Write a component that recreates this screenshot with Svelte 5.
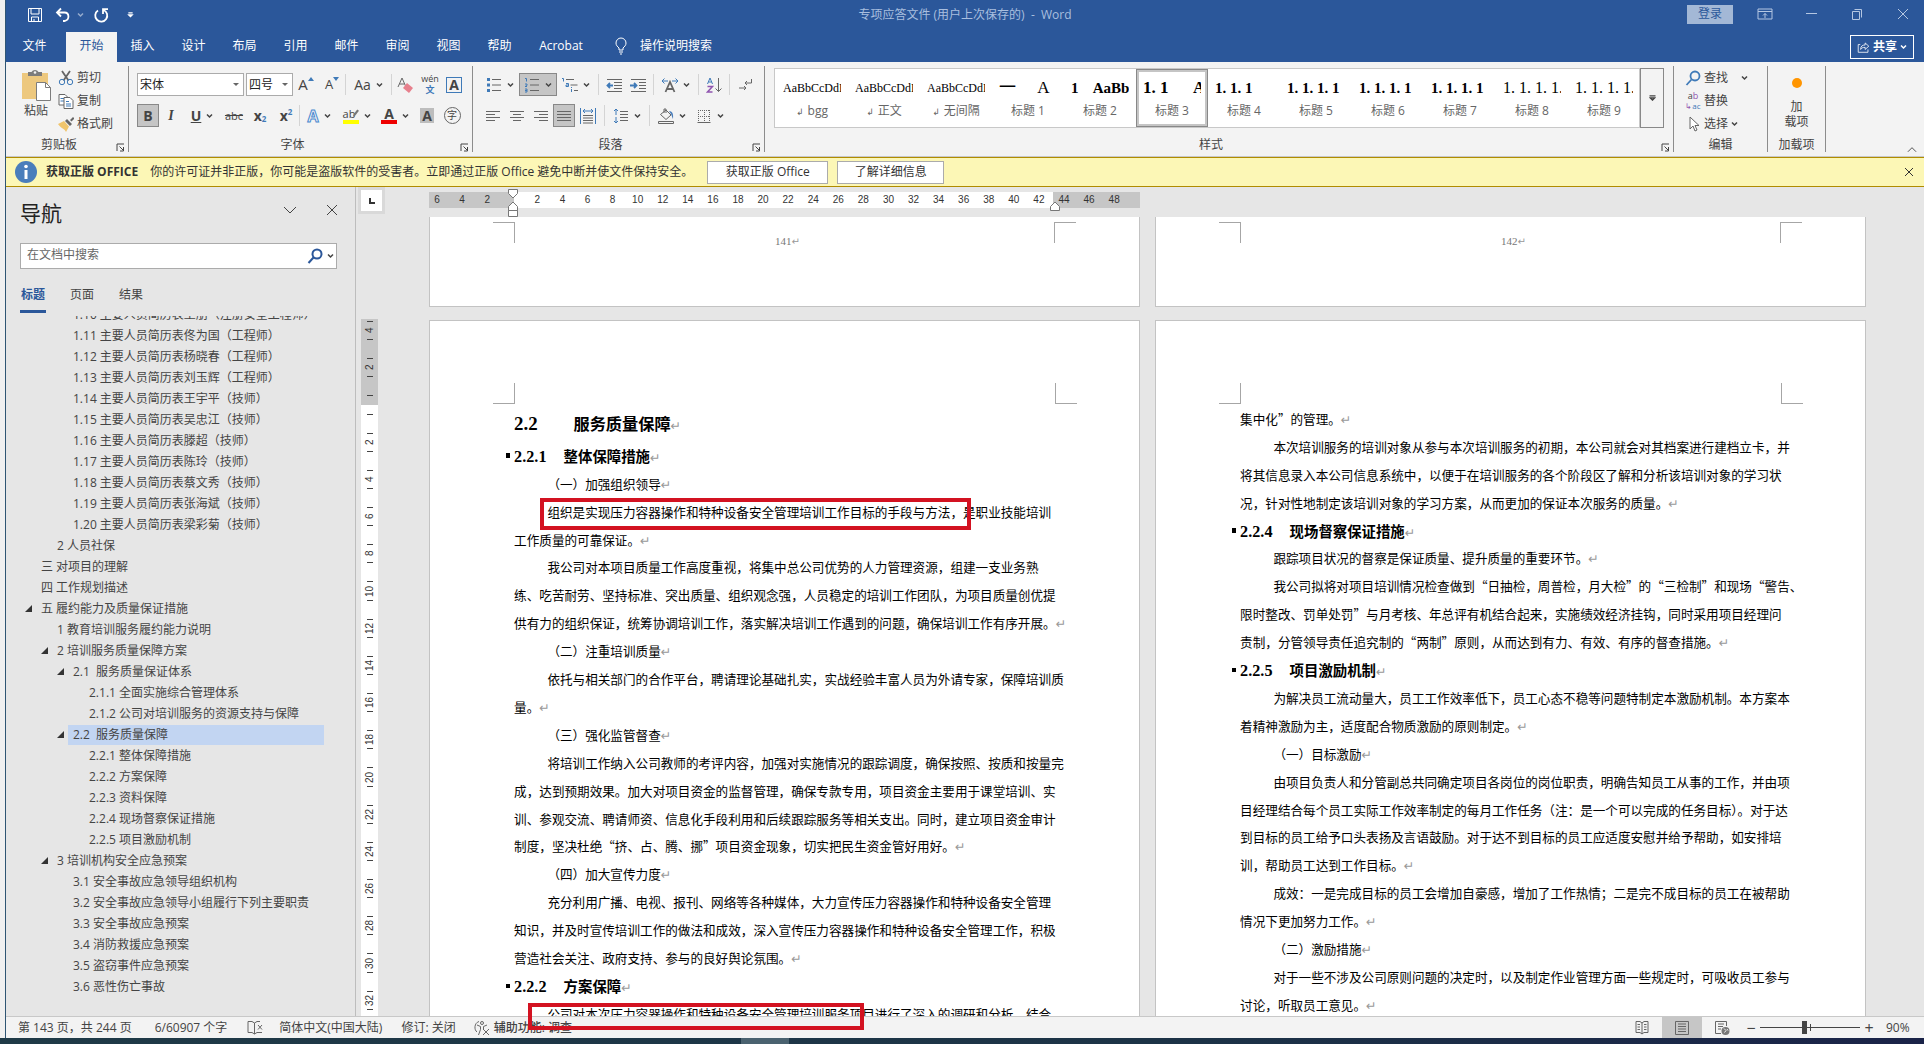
<script>
	let zoom = $state(90);
	let navTab = $state('标题');

	const menu = ['插入', '设计', '布局', '引用', '邮件', '审阅', '视图', '帮助'];

	const styles = [
		{ name: 'bgg', sample: 'AaBbCcDdEe', mark: true, cls: 'small' },
		{ name: '正文', sample: 'AaBbCcDdEe', mark: true, cls: 'small' },
		{ name: '无间隔', sample: 'AaBbCcDdEe', mark: true, cls: 'small' },
		{ name: '标题 1', sample: '一     A', cls: 'big' },
		{ name: '标题 2', sample: '1    AaBb', cls: 'bold' },
		{ name: '标题 3', sample: '1. 1      A', cls: 'bold large', on: true },
		{ name: '标题 4', sample: '1. 1. 1', cls: 'bold' },
		{ name: '标题 5', sample: '1. 1. 1. 1', cls: 'bold' },
		{ name: '标题 6', sample: '1. 1. 1. 1', cls: 'bold' },
		{ name: '标题 7', sample: '1. 1. 1. 1', cls: 'bold' },
		{ name: '标题 8', sample: '1. 1. 1. 1.', cls: 'plain-no' },
		{ name: '标题 9', sample: '1. 1. 1. 1.', cls: 'plain-no' }
	];

	const headings = [
		{ level: 3, text: '1.10 主要人员简历表王朋（注册安全工程师）' },
		{ level: 3, text: '1.11 主要人员简历表佟为国（工程师）' },
		{ level: 3, text: '1.12 主要人员简历表杨晓春（工程师）' },
		{ level: 3, text: '1.13 主要人员简历表刘玉辉（工程师）' },
		{ level: 3, text: '1.14 主要人员简历表王宇平（技师）' },
		{ level: 3, text: '1.15 主要人员简历表吴忠江（技师）' },
		{ level: 3, text: '1.16 主要人员简历表滕超（技师）' },
		{ level: 3, text: '1.17 主要人员简历表陈玲（技师）' },
		{ level: 3, text: '1.18 主要人员简历表蔡文秀（技师）' },
		{ level: 3, text: '1.19 主要人员简历表张海斌（技师）' },
		{ level: 3, text: '1.20 主要人员简历表梁彩菊（技师）' },
		{ level: 2, text: '2 人员社保' },
		{ level: 1, text: '三 对项目的理解' },
		{ level: 1, text: '四 工作规划描述' },
		{ level: 1, text: '五 履约能力及质量保证措施', open: true },
		{ level: 2, text: '1 教育培训服务履约能力说明' },
		{ level: 2, text: '2 培训服务质量保障方案', open: true },
		{ level: 3, text: '2.1  服务质量保证体系', open: true },
		{ level: 4, text: '2.1.1 全面实施综合管理体系' },
		{ level: 4, text: '2.1.2 公司对培训服务的资源支持与保障' },
		{ level: 3, text: '2.2  服务质量保障', open: true, on: true },
		{ level: 4, text: '2.2.1 整体保障措施' },
		{ level: 4, text: '2.2.2 方案保障' },
		{ level: 4, text: '2.2.3 资料保障' },
		{ level: 4, text: '2.2.4 现场督察保证措施' },
		{ level: 4, text: '2.2.5 项目激励机制' },
		{ level: 2, text: '3 培训机构安全应急预案', open: true },
		{ level: 3, text: '3.1 安全事故应急领导组织机构' },
		{ level: 3, text: '3.2 安全事故应急领导小组履行下列主要职责' },
		{ level: 3, text: '3.3 安全事故应急预案' },
		{ level: 3, text: '3.4 消防救援应急预案' },
		{ level: 3, text: '3.5 盗窃事件应急预案' },
		{ level: 3, text: '3.6 恶性伤亡事故' }
	];

	// a paragraph is a list of its lines, a heading has a number and a title
	const leftPage = [
		{ h: 2, no: '2.2', title: '服务质量保障' },
		{ h: 3, no: '2.2.1', title: '整体保障措施' },
		{ lines: ['（一）加强组织领导'] },
		{ lines: ['组织是实现压力容器操作和特种设备安全管理培训工作目标的手段与方法，是职业技能培训', '工作质量的可靠保证。'] },
		{ lines: [
			'我公司对本项目质量工作高度重视，将集中总公司优势的人力管理资源，组建一支业务熟',
			'练、吃苦耐劳、坚持标准、突出质量、组织观念强，人员稳定的培训工作团队，为项目质量创优提',
			'供有力的组织保证，统筹协调培训工作，落实解决培训工作遇到的问题，确保培训工作有序开展。'
		] },
		{ lines: ['（二）注重培训质量'] },
		{ lines: ['依托与相关部门的合作平台，聘请理论基础扎实，实战经验丰富人员为外请专家，保障培训质', '量。'] },
		{ lines: ['（三）强化监管督查'] },
		{ lines: [
			'将培训工作纳入公司教师的考评内容，加强对实施情况的跟踪调度，确保按照、按质和按量完',
			'成，达到预期效果。加大对项目资金的监督管理，确保专款专用，项目资金主要用于课堂培训、实',
			'训、参观交流、聘请师资、信息化手段利用和后续跟踪服务等相关支出。同时，建立项目资金审计',
			'制度，坚决杜绝“挤、占、腾、挪”项目资金现象，切实把民生资金管好用好。'
		] },
		{ lines: ['（四）加大宣传力度'] },
		{ lines: [
			'充分利用广播、电视、报刊、网络等各种媒体，大力宣传压力容器操作和特种设备安全管理',
			'知识，并及时宣传培训工作的做法和成效，深入宣传压力容器操作和特种设备安全管理工作，积极',
			'营造社会关注、政府支持、参与的良好舆论氛围。'
		] },
		{ h: 3, no: '2.2.2', title: '方案保障' },
		{ lines: ['公司对本次压力容器操作和特种设备安全管理培训服务项目进行了深入的调研和分析，结合'], open: true }
	];

	const rightPage = [
		{ lines: ['集中化”的管理。'], flush: true },
		{ lines: [
			'本次培训服务的培训对象从参与本次培训服务的初期，本公司就会对其档案进行建档立卡，并',
			'将其信息录入本公司信息系统中，以便于在培训服务的各个阶段区了解和分析该培训对象的学习状',
			'况，针对性地制定该培训对象的学习方案，从而更加的保证本次服务的质量。'
		] },
		{ h: 3, no: '2.2.4', title: '现场督察保证措施' },
		{ lines: ['跟踪项目状况的督察是保证质量、提升质量的重要环节。'] },
		{ lines: [
			'我公司拟将对项目培训情况检查做到“日抽检，周普检，月大检”的“三检制”和现场“警告、',
			'限时整改、罚单处罚”与月考核、年总评有机结合起来，实施绩效经济挂钩，同时采用项目经理问',
			'责制，分管领导责任追究制的“两制”原则，从而达到有力、有效、有序的督查措施。'
		] },
		{ h: 3, no: '2.2.5', title: '项目激励机制' },
		{ lines: ['为解决员工流动量大，员工工作效率低下，员工心态不稳等问题特制定本激励机制。本方案本', '着精神激励为主，适度配合物质激励的原则制定。'] },
		{ lines: ['（一）目标激励'] },
		{ lines: [
			'由项目负责人和分管副总共同确定项目各岗位的岗位职责，明确告知员工从事的工作，并由项',
			'目经理结合每个员工实际工作效率制定的每月工作任务（注：是一个可以完成的任务目标）。对于达',
			'到目标的员工给予口头表扬及言语鼓励。对于达不到目标的员工应适度安慰并给予帮助，如安排培',
			'训，帮助员工达到工作目标。'
		] },
		{ lines: ['成效：一是完成目标的员工会增加自豪感，增加了工作热情；二是完不成目标的员工在被帮助', '情况下更加努力工作。'] },
		{ lines: ['（二）激励措施'] },
		{ lines: ['对于一些不涉及公司原则问题的决定时，以及制定作业管理方面一些规定时，可吸收员工参与', '讨论，听取员工意见。'] }
	];

	const pages = [
		{ prev: 141, body: leftPage },
		{ prev: 142, body: rightPage }
	];

	const hRuler = [6, 4, 2, '', ...Array.from({ length: 24 }, (_, i) => (i + 1) * 2)];
	const vRuler = [4, 2, '', ...Array.from({ length: 16 }, (_, i) => (i + 1) * 2)];
</script>

{#snippet chev()}
	<svg class="chev" viewBox="0 0 7 5"><path d="M1 1l2.5 2.5L6 1" /></svg>
{/snippet}

{#snippet launcher(label)}
	<button class="launcher" aria-label={label}>
		<svg viewBox="0 0 9 9"><path d="M1 8V1h7M3.500 3.500L7 7M7.500 4v4H4" /></svg>
	</button>
{/snippet}

{#snippet lines(d)}
	<svg class="icon" viewBox="0 0 16 16"><path class="grey" {d} /></svg>
{/snippet}

{#snippet paper(blocks)}
	<div class="text" style="zoom: {zoom / 100}">
		{#each blocks as b}
			{#if b.h === 2}
				<h2><span class="no">{b.no}</span>{b.title}<i class="end">↵</i></h2>
			{:else if b.h === 3}
				<h3><span class="no">{b.no}</span>{b.title}<i class="end">↵</i></h3>
			{:else}
				<p class:flush={b.flush}>
					{#each b.lines as line, i}
						<span class="line">{line}{#if i === b.lines.length - 1 && !b.open}<i class="end">↵</i>{/if}</span>
					{/each}
				</p>
			{/if}
		{/each}
	</div>
{/snippet}

<div class="desktop" lang="zh-CN">
	<div class="word">
		<header>
			<div class="titlebar">
				<div class="quick">
					<button aria-label="保存"><svg class="icon" viewBox="0 0 16 16"><path class="white" d="M1.500 1.500h13v13h-13zM4 2v5h8V2M4.500 14v-4h7v4M7 12v2" /></svg></button>
					<button class="undo" aria-label="撤消"><svg class="icon" viewBox="0 0 16 16"><path class="white thick" d="M6 1.500L2 5.500l4 4M2.500 5.500h7c5 0 5.500 7.500 0 8.500H8" /></svg>{@render chev()}</button>
					<button aria-label="重复"><svg class="icon" viewBox="0 0 16 16"><path class="white thick" d="M5 3.500a6 6 0 1 0 5.500-.5M10 7V2.200h5" /></svg></button>
					<button class="more" aria-label="自定义"><svg class="chev" viewBox="0 0 7 7"><path d="M1 1h5M1.500 3.500L3.500 5.500 5.500 3.500z" /></svg></button>
				</div>
				<div class="doc-title">专项应答文件 (用户上次保存的) &nbsp;- &nbsp;Word</div>
				<div class="win">
					<button class="login">登录</button>
					<button aria-label="功能区选项"><svg class="icon" viewBox="0 0 16 16"><path d="M1 3h14v10H1zM1 5.500h14M8 12V7.500M6 9.500l2-2 2 2" /></svg></button>
					<button aria-label="最小化"><svg class="icon" viewBox="0 0 16 16"><path d="M3 7.500h11" /></svg></button>
					<button aria-label="还原"><svg class="icon" viewBox="0 0 16 16"><path d="M3.500 5.500h7v8h-7zM5.500 3.500h7v8" /></svg></button>
					<button aria-label="关闭"><svg class="icon" viewBox="0 0 16 16"><path d="M3 3l10 10M13 3L3 13" /></svg></button>
				</div>
			</div>
			<nav class="menu">
				<button class="file">文件</button>
				<button class="active">开始</button>
				{#each menu as item}
					<button>{item}</button>
				{/each}
				<button class="acrobat">Acrobat</button>
				<button class="tell">
					<svg class="bulb" viewBox="0 0 12 18"><path class="white" d="M4 13v-2C2.500 9.500 1 8.500 1 6a5 5 0 0 1 10 0c0 2.500-1.500 3.500-3 5v2zM4 15h4M5 17h2" /></svg>
					操作说明搜索
				</button>
				<button class="share">
					<svg class="icon" viewBox="0 0 16 16"><path class="white" d="M4 5H1.500v9.500h12V11M4.500 11c0-4 2-5.500 5.500-5.500V3l4.500 4-4.500 4V8.500c-3 0-4.500.5-5.500 2.500z" /></svg>
					共享{@render chev()}
				</button>
			</nav>
		</header>

		<div class="ribbon">
			<section class="group clip">
				<div class="tools side">
					<button class="paste">
						<svg viewBox="0 0 30 32"><path fill="#edc87e" d="M1 4h26v26H1z" /><path fill="#7c7c7c" d="M7 7V3h3.500a4 4 0 0 1 7 0H21v4z" /><circle cx="14" cy="3.500" r="1.300" fill="#f3f3f3" /><path fill="#fff" stroke="#7c7c7c" d="M15.500 13.500h9l5 5v13h-14z" /><path fill="none" stroke="#7c7c7c" d="M24.500 13.500v5h5" /></svg>
						<span>粘贴</span>{@render chev()}
					</button>
					<div class="stack">
						<button><svg class="icon" viewBox="0 0 16 16"><path class="grey thick" d="M4 1l6.500 9.500M12 1L5.500 10.500" /><circle class="blue" cx="4" cy="12" r="2.700" /><circle class="blue" cx="12" cy="12" r="2.700" /></svg>剪切</button>
						<button><svg class="icon" viewBox="0 0 16 16"><path class="paper" d="M1 1.500h6l2.500 2.500v8H1z" /><path class="blue" d="M2.500 5.500h4M2.500 8h4" /><path class="paper" d="M6 4.500h6l3 3v8H6z" /><path class="blue" d="M8 8.500h3M8 11h5M8 13h5" /></svg>复制</button>
						<button><svg class="icon" viewBox="0 0 16 16"><path fill="#f0c56c" d="M0 8l6-3 5 5.500L8 16c-1-3-5-3.500-8-8z" /><path fill="#666" d="M7 5l2-2 5 5-2 2zM12 4l3-3 1.500 1.500-3 3z" /></svg>格式刷</button>
					</div>
				</div>
				<div class="name">剪贴板{@render launcher('剪贴板')}</div>
			</section>

			<section class="group font">
				<div class="tools rows">
					<div class="row">
						<label class="pick family"><select aria-label="字体"><option>宋体</option><option>黑体</option></select></label>
						<label class="pick size"><select aria-label="字号"><option>四号</option><option>小四</option></select></label>
						<button class="t26 glyph" aria-label="增大字号">A<svg class="tip" viewBox="0 0 6 4"><path d="M0 4l3-4 3 4z" /></svg></button>
						<button class="t26 glyph less" aria-label="减小字号">A<svg class="tip" viewBox="0 0 6 4"><path d="M0 0l3 4 3-4z" /></svg></button>
						<i class="sep tight"></i>
						<button class="t45">Aa{@render chev()}</button>
						<i class="sep tight"></i>
						<button class="t26" aria-label="清除格式"><svg class="icon" viewBox="0 0 16 16"><path class="grey" d="M1 10L5 1l4 9M2.500 7h5" /><path fill="#e7808d" d="M10 6l6 5-4 5-6-5z" /></svg></button>
						<button class="wen" aria-label="拼音指南"><span>wén</span><b>文</b></button>
						<button aria-label="字符边框"><span class="framed">A</span></button>
					</div>
					<div class="row">
						<button class="t22 bold on">B</button>
						<button class="italic">I</button>
						<button class="drop"><u><b>U</b></u>{@render chev()}</button>
						<button class="t26"><s>abc</s></button>
						<button class="t26 bold">x<sub>2</sub></button>
						<button class="t26 bold">x<sup>2</sup></button>
						<i class="sep tight"></i>
						<button class="drop"><span class="outline">A</span>{@render chev()}</button>
						<button class="drop"><span class="marker">ab<svg viewBox="0 0 8 10"><path d="M1 9l1-3 4-5 2 1.500-4 5z" /></svg></span>{@render chev()}</button>
						<button class="drop"><span class="ink">A</span>{@render chev()}</button>
						<button class="t26"><span class="shade">A</span></button>
						<button><span class="ring">字</span></button>
					</div>
				</div>
				<div class="name">字体{@render launcher('字体')}</div>
			</section>

			<section class="group para">
				<div class="tools rows">
					<div class="row">
						<button class="drop" aria-label="项目符号"><svg class="icon" viewBox="0 0 16 16"><path class="dots" d="M1 2.500h3M1 8h3M1 13.500h3" /><path class="grey" d="M6 2.500h9M6 8h9M6 13.500h9" /></svg>{@render chev()}</button>
						<button class="drop on" aria-label="编号"><svg class="icon" viewBox="0 0 16 16"><path class="blue" d="M1 1.500h1.500v3M1 7h2v1.500L1 9.500h2M1 12h2v3H1M1 13.500h2" /><path class="grey" d="M6 2.500h9M6 8h9M6 13.500h9" /></svg>{@render chev()}</button>
						<button class="drop" aria-label="多级列表"><svg class="icon" viewBox="0 0 16 16"><path class="blue" d="M0 1.500h1.500v3M4 6.500h2.500v3H4V8h2M9.500 12v3M9.500 10v1" /><path class="grey" d="M4 2.500h8M8.500 8h7M12 13.500h4" /></svg>{@render chev()}</button>
						<i class="sep"></i>
						<button aria-label="减少缩进"><svg class="icon" viewBox="0 0 16 16"><path class="grey" d="M1 2.500h15M8 5.500h8M8 8.500h8M8 11.500h8M1 14.500h15" /><path class="blue thick" d="M7 8.500H1.500M4 6L1.500 8.500 4 11" /></svg></button>
						<button aria-label="增加缩进"><svg class="icon" viewBox="0 0 16 16"><path class="grey" d="M1 2.500h15M9 5.500h7M9 8.500h7M9 11.500h7M1 14.500h15" /><path class="blue thick" d="M0 8.500h6M4 6l2.500 2.500L4 11" /></svg></button>
						<i class="sep"></i>
						<button class="drop" aria-label="中文版式"><svg class="icon" viewBox="0 0 16 16"><path class="grey thick" d="M3.500 15L8 5l4.500 10M5 12h6" /><path class="blue" d="M0 4h6M2.500 1.500L0 4l2.500 2.500M10 4h6M13.500 1.500L16 4l-2.500 2.500" /></svg>{@render chev()}</button>
						<i class="sep"></i>
						<button aria-label="排序"><svg class="icon" viewBox="0 0 16 16"><path class="blue" d="M1.500 7L4 1l2.500 6M2.500 5h3" /><path class="purple" d="M1.500 9.500h5l-5 5.500h5" /><path class="grey" d="M12.500 1v13.500M9.500 11.500l3 3 3-3" /></svg></button>
						<i class="sep"></i>
						<button aria-label="显示编辑标记"><svg class="icon" viewBox="0 0 16 16"><path class="grey" d="M14.500 2v4H8M10 4L8 6l2 2M2 11h7M7 9l2 2-2 2" /></svg></button>
					</div>
					<div class="row">
						<button aria-label="左对齐">{@render lines('M1 3.500h14M1 6.500h9M1 9.500h14M1 12.500h9')}</button>
						<button aria-label="居中">{@render lines('M1 3.500h14M4 6.500h8M1 9.500h14M4 12.500h8')}</button>
						<button aria-label="右对齐">{@render lines('M1 3.500h14M6 6.500h9M1 9.500h14M6 12.500h9')}</button>
						<button class="t22 on" aria-label="两端对齐">{@render lines('M1 3.500h14M1 6.500h14M1 9.500h14M1 12.500h14')}</button>
						<button class="t26" aria-label="分散对齐"><svg class="icon" viewBox="0 0 16 16"><path class="grey" d="M3 7.500h10M3 10h10M3 12.500h10M3 15h10" /><path class="blue" d="M.5 0v16M15.500 0v16M3 3h10M5 1L3 3l2 2M11 1l2 2-2 2" /></svg></button>
						<i class="sep"></i>
						<button class="drop" aria-label="行距"><svg class="icon" viewBox="0 0 16 16"><path class="grey" d="M7 3.500h8M7 6.500h8M7 9.500h8M7 12.500h8" /><path class="blue" d="M3 1v6M1 3l2-2 2 2M3 9v6M1 13l2 2 2-2" /></svg>{@render chev()}</button>
						<i class="sep"></i>
						<button class="drop" aria-label="底纹"><svg class="icon" viewBox="0 0 16 16"><path class="grey" d="M2.500 6.500L8 2l5 5-5 4.500zM6 5V1h2v4M.5 13.500h15v2H.5z" /><path fill="#4a7ebb" d="M11 3c4 0 4.500 4 4 8-1-2-1-4-4-8z" /></svg>{@render chev()}</button>
						<button class="drop" aria-label="边框"><svg class="icon" viewBox="0 0 16 16"><path class="dotted" d="M2 2.500h12M2 8.500h12M2.500 2v12M8.500 2v12M13.500 2v12" /><path class="grey" d="M1.500 14.500h13" /></svg>{@render chev()}</button>
					</div>
				</div>
				<div class="name">段落{@render launcher('段落')}</div>
			</section>

			<section class="group looks">
				<div class="tools">
					<div class="gallery">
						{#each styles as s}
							<button class="look" class:chosen={s.on}>
								<span class="sample {s.cls}">{s.sample}</span>
								<span class="label">{#if s.mark}<i>↲</i>{/if}{s.name}</span>
							</button>
						{/each}
					</div>
					<button class="expand" aria-label="其他"><svg class="chev" viewBox="0 0 7 7"><path d="M0 1h7M1 3.500L3.500 6 6 3.500z" /></svg></button>
				</div>
				<div class="name">样式{@render launcher('样式')}</div>
			</section>

			<section class="group edit">
				<div class="tools stack">
					<button><svg class="icon" viewBox="0 0 16 16"><circle class="blue thick" cx="10" cy="6" r="4.500" /><path class="blue thick" d="M6.500 9.500L1.500 15" /></svg>查找<span class="far">{@render chev()}</span></button>
					<button><span class="swap"><span>a<em>b</em></span><span><em>↳</em>ac</span></span>替换</button>
					<button><svg class="icon" viewBox="0 0 16 16"><path class="paper" d="M5 1v12l3-3 2 5 2-1-2-4.500h4z" /></svg>选择{@render chev()}</button>
				</div>
				<div class="name whole">编辑</div>
			</section>

			<section class="group addin">
				<div class="tools">
					<button class="load"><i class="dot"></i><span>加<br />载项</span></button>
				</div>
				<div class="name whole">加载项</div>
			</section>
			<button class="fold" aria-label="折叠功能区"><svg viewBox="0 0 11 7"><path d="M1 6l4.500-4.500L10 6" /></svg></button>
		</div>

		<div class="notice">
			<svg class="info" viewBox="0 0 22 22"><circle cx="11" cy="11" r="11" fill="#4a7ebb" /><path fill="#fff" d="M9.500 9h3v9h-3z" /><circle cx="11" cy="5.500" r="1.800" fill="#fff" /></svg>
			<b>获取正版 OFFICE</b>
			<span>你的许可证并非正版，你可能是盗版软件的受害者。立即通过正版 Office 避免中断并使文件保持安全。</span>
			<button class="get">获取正版 Office</button>
			<button>了解详细信息</button>
			<button class="close" aria-label="关闭"><svg viewBox="0 0 10 10"><path d="M1 1l8 8M9 1L1 9" /></svg></button>
		</div>

		<div class="work">
			<aside>
				<div class="nav-head">
					<h1>导航</h1>
					<button aria-label="选项"><svg viewBox="0 0 14 14"><path d="M1 4l6 6 6-6" /></svg></button>
					<button aria-label="关闭导航"><svg viewBox="0 0 14 14"><path d="M2 2l10 10M12 2L2 12" /></svg></button>
				</div>
				<div class="search">
					<input placeholder="在文档中搜索" aria-label="在文档中搜索" />
					<button aria-label="搜索"><svg class="icon" viewBox="0 0 16 16"><circle class="navy" cx="10" cy="6" r="4.500" /><path class="navy" d="M6.500 9.500L1.500 15" /></svg>{@render chev()}</button>
				</div>
				<div class="nav-tabs">
					{#each ['标题', '页面', '结果'] as t}
						<button class:active={navTab === t} onclick={() => (navTab = t)}>{t}</button>
					{/each}
				</div>
				<div class="tree">
					<ul>
						{#each headings as h}
							<li class="l{h.level}">
								{#if h.open}<svg class="tri" viewBox="0 0 7 7"><path d="M7 0v7H0z" /></svg>{/if}
								<button class:current={h.on}>{h.text}</button>
							</li>
						{/each}
					</ul>
				</div>
			</aside>

			<div class="rulers">
				<button class="corner" aria-label="制表符">
					<svg viewBox="0 0 6 6"><path d="M1 0v5h5" /></svg>
				</button>
				<div class="vruler">
					<div class="vcells">
						{#each vRuler as n}
							<span><i></i><b>{n}</b><i></i></span>
						{/each}
					</div>
				</div>
			</div>

			<main>
				<div class="sheets">
					<div class="hruler">
						<div class="hcells">
							{#each hRuler as n}
								<span>{n}</span>
							{/each}
						</div>
						<svg class="indent" viewBox="0 0 10 28"><path d="M.5.500h9v4L5 9 .5 4.500zM5 13l4.500 4.500v4h-9v-4zM.5 21.500h9v6h-9z" /></svg>
						<svg class="indent end-stop" viewBox="0 0 10 10"><path d="M5 1l4.500 4.500v4h-9v-4z" /></svg>
					</div>
					<div class="spread">
						{#each pages as page}
							<div class="column">
								<div class="sheet tail">
									<div class="marks">
										<i class="mark tl"></i>
										<span class="folio">{page.prev}<i>↵</i></span>
										<i class="mark tr"></i>
									</div>
								</div>
								<article class="sheet">
									<div class="marks top">
										<i class="mark bl"></i>
										<i class="mark br"></i>
									</div>
									{@render paper(page.body)}
								</article>
							</div>
						{/each}
					</div>
				</div>
			</main>
			<div class="callout first"></div>
			<div class="callout second"></div>
		</div>

		<footer>
			<span class="pages">第 143 页，共 244 页</span>
			<span class="words">6/60907 个字</span>
			<svg class="icon proof" viewBox="0 0 16 16"><path class="grey" d="M7.500 3L5 1.500H1v11h4L7.500 14zM7.500 3L10 1.500h3M7.500 14l2.500-1.500h5M11 5l4 4.500M15 5l-4 4.500" /></svg>
			<span class="lang">简体中文(中国大陆)</span>
			<span class="track">修订: 关闭</span>
			<svg class="icon" viewBox="0 0 16 16"><circle class="grey" cx="8" cy="3" r="1.500" /><path class="grey" d="M5 1.500C0 3 0 10 3 12M3 5l3.500 1.500v3L4.500 15M13 5L9.500 6.500v3M9 9l6 6M15 9l-6 6" /></svg>
			<b>辅助功能: 调查</b>
			<div class="views">
				<button aria-label="阅读视图"><svg class="icon" viewBox="0 0 16 16"><path class="grey" d="M8 3L6 1.500H2v11h4L8 14l2-1.500h4v-11h-4zM8 3v11M3.500 4.500H6M3.500 7H6M3.500 9.500H6M10 4.500h2.500M10 7h2.500M10 9.500h2.500" /></svg></button>
				<button class="on" aria-label="页面视图"><svg class="icon" viewBox="0 0 16 16"><path class="grey" d="M1.500 1.500h13v13h-13zM4 4h8M4 6.500h8M4 9h8M4 11.500h8" /></svg></button>
				<button aria-label="Web 版式"><svg class="icon" viewBox="0 0 16 16"><path class="grey" d="M7 13.500H1.500v-12h11V6M4 4h6M4 6.500h5M4 9h3" /><circle cx="11.500" cy="11" r="4" fill="#777" /><path stroke="#f3f3f3" fill="none" d="M10 8.500l2 2-1.500 2M13 9l1 1.500" /></svg></button>
			</div>
			<button class="step" aria-label="缩小">−</button>
			<input type="range" min="10" max="190" bind:value={zoom} aria-label="缩放" />
			<button class="step" aria-label="放大">+</button>
			<output>{zoom}%</output>
		</footer>
	</div>
	<div class="taskbar"><i></i></div>
</div>

<style>
	:global(body) {
		font-family: "Open Sans", "Noto Sans CJK SC", sans-serif;
		font-size: 12px;
		line-height: 16px;
		color: #333;
		overflow: hidden;
	}
	.desktop {
		height: 100vh;
		display: flex;
		flex-direction: column;
		background: #f0f0f0;
	}
	.word {
		flex: 1;
		min-height: 0;
		margin-left: 5px;
		border-left: 1px solid #2f5573;
		display: flex;
		flex-direction: column;
		background: #e6e6e6;
	}
	button {
		font: inherit;
		color: inherit;
		background: none;
		border: 0;
		padding: 0;
		display: flex;
		align-items: center;
		justify-content: center;
		white-space: nowrap;
	}
	svg {
		display: block;
		flex: none;
		fill: none;
		stroke: currentColor;
	}
	.icon {
		width: 16px;
		height: 16px;
	}
	.icon path[fill], .icon circle[fill], .paste svg path, .paste svg circle, .info path, .info circle {
		stroke-width: 0;
	}
	.paste svg path[stroke] {
		stroke-width: 1;
	}
	.icon path[stroke] {
		stroke-width: 1;
	}
	.grey { stroke: #666; }
	.blue { stroke: #3f7ab8; }
	.white { stroke: #fff; }
	.purple { stroke: #9055b0; stroke-width: 1.5; }
	.thick { stroke-width: 1.8; }
	.navy { stroke: #2b579a; stroke-width: 2; }
	.paper { stroke: #666; fill: #fff; }
	.dots { stroke: #3f7ab8; stroke-width: 3; }
	.dotted { stroke: #666; stroke-dasharray: 1 1; }
	.chev {
		width: 7px;
		height: 6px;
		stroke-width: 1.5;
	}

	/* title bar and tabs */
	header {
		background: #2b579a;
		color: #fff;
	}
	.titlebar {
		height: 32px;
		display: grid;
		grid-template-columns: 1fr auto 1fr;
	}
	.quick {
		display: flex;
		align-items: center;
		gap: 12px;
		padding: 0 0 2px 21px;
	}
	.undo {
		gap: 6px;
		margin-right: -3px;
	}
	.undo .chev {
		opacity: .5;
	}
	.more {
		margin-left: 6px;
	}
	.doc-title {
		padding-top: 7px;
		color: #a9bfdf;
	}
	.win {
		display: flex;
		justify-content: flex-end;
		align-items: center;
		gap: 30px;
		padding: 0 13px 4px 0;
		color: #b5c7e2;
	}
	.login {
		width: 46px;
		height: 19px;
		background: #a3b8d6;
		color: #2b579a;
		margin-right: -6px;
	}
	.menu {
		height: 30px;
		display: flex;
		padding-left: 3px;
	}
	.menu button {
		width: 51px;
		padding-bottom: 2px;
	}
	.menu .file {
		margin-right: 6px;
	}
	.menu .active {
		background: #f3f3f3;
		color: #2b579a;
	}
	.menu .acrobat {
		width: 72px;
	}
	.menu .tell {
		width: auto;
		gap: 13px;
		margin-left: 18px;
	}
	.bulb {
		width: 12px;
		height: 18px;
	}
	.menu .share {
		width: 64px;
		height: 24px;
		gap: 3px;
		margin: 3px 10px 0 auto;
		border: 1px solid #fff;
		padding: 0;
		font-weight: bold;
	}
	.share .icon {
		width: 13px;
	}

	/* ribbon */
	.ribbon {
		display: flex;
		height: 95px;
		background: #f3f3f3;
		border-bottom: 1px solid #c8c8c8;
		box-sizing: border-box;
		color: #444;
	}
	.group {
		display: flex;
		flex-direction: column;
		margin: 4px 0;
		border-right: 1px solid #8c8c8c;
		box-sizing: border-box;
	}
	.tools {
		flex: 1;
	}
	.name {
		display: flex;
		justify-content: center;
		padding-right: 16px;
		position: relative;
		line-height: 15px;
	}
	.name.whole {
		padding: 0;
	}
	.launcher {
		position: absolute;
		right: 3px;
		bottom: 0;
	}
	.launcher svg {
		width: 9px;
		height: 9px;
	}
	.clip { width: 123px; }
	.font { width: 344px; }
	.para { width: 292px; }
	.looks { flex: 1; min-width: 0; }
	.edit { width: 94px; }
	.addin { width: 58px; }
	.side {
		display: flex;
		padding-left: 14px;
	}
	.paste {
		flex-direction: column;
		justify-content: flex-start;
		padding-top: 3px;
		gap: 2px;
		width: 32px;
	}
	.paste svg:first-child {
		width: 30px;
		height: 32px;
	}
	.paste .chev {
		margin-top: 3px;
	}
	.stack {
		display: flex;
		flex-direction: column;
	}
	.side .stack {
		margin-left: 6px;
	}
	.stack button {
		height: 23px;
		gap: 3px;
		justify-content: flex-start;
	}
	.edit .stack {
		padding-left: 11px;
	}
	.far {
		margin-left: 10px;
	}
	.swap {
		width: 16px;
		display: flex;
		flex-direction: column;
		line-height: 10px;
		font-size: 9px;
	}
	.swap em {
		font-style: normal;
		color: #9055b0;
	}
	.swap span + span {
		font-size: 8px;
		color: #3f7ab8;
	}
	.rows {
		display: flex;
		flex-direction: column;
		gap: 8px;
		padding: 7px 0 0 8px;
	}
	.row {
		display: flex;
		align-items: center;
		height: 23px;
	}
	.row button {
		width: 24px;
		height: 23px;
		box-sizing: border-box;
		font-size: 14px;
	}
	.row .drop { width: 38px; gap: 5px; }
	.row .t22 { width: 22px; }
	.row .t26 { width: 26px; }
	.row .t45 { width: 45px; gap: 5px; }
	.row .on {
		background: #c5c5c5;
		border: 1px solid #888;
	}
	.sep {
		width: 1px;
		height: 21px;
		background: #d4d4d4;
		margin: 0 3px;
	}
	.sep.tight {
		margin: 0;
	}
	.pick {
		background: #fff;
		border: 1px solid #ababab;
		box-sizing: border-box;
		height: 23px;
		position: relative;
		margin-right: 2px;
	}
	.pick::after {
		content: "";
		position: absolute;
		right: 4px;
		top: 9px;
		border: 3px solid transparent;
		border-top-color: #666;
	}
	.family { width: 107px; }
	.size { width: 47px; margin-right: 0; }
	.pick select {
		appearance: none;
		width: 100%;
		height: 21px;
		border: 0;
		padding: 0 2px;
		background: none;
		font: inherit;
		color: #222;
	}
	.row .glyph { font-size: 15px; align-items: flex-start; }
	.row .less { font-size: 13px; }
	.glyph, .less { line-height: 23px; }
	.tip {
		width: 6px;
		height: 4px;
		margin-top: 4px;
		fill: #3f7ab8;
		stroke: none;
	}
	.row .wen {
		flex-direction: column;
		line-height: 11px;
		font-size: 9px;
	}
	.wen b {
		color: #3f7ab8;
		line-height: 12px;
	}
	.framed {
		width: 14px;
		line-height: 14px;
		border: 1px solid #3f7ab8;
		font-weight: bold;
	}
	.bold { font-weight: bold; }
	.italic {
		font-family: "Liberation Serif", serif;
		font-style: italic;
		font-weight: bold;
	}
	.row s { font-size: 11px; }
	sub, sup {
		font-size: 8px;
		line-height: 8px;
		color: #3f7ab8;
	}
	sub { align-self: flex-end; margin-bottom: 4px; }
	sup { align-self: flex-start; margin-top: 4px; }
	.outline {
		color: #f3f3f3;
		font-size: 16px;
		font-weight: bold;
		-webkit-text-stroke: 1px #4a8ad0;
	}
	.marker {
		font-size: 11px;
		line-height: 12px;
		border-bottom: 4px solid #ff0;
		display: flex;
	}
	.marker svg {
		width: 7px;
		height: 10px;
		margin-left: -3px;
		fill: #777;
		stroke: none;
	}
	.ink {
		width: 16px;
		font-weight: bold;
		line-height: 13px;
		border-bottom: 4px solid #e00;
	}
	.shade {
		width: 14px;
		line-height: 15px;
		background: #bdbdbd;
		font-weight: bold;
	}
	.ring {
		width: 15px;
		line-height: 15px;
		border: 1px solid #666;
		border-radius: 50%;
		font-size: 10px;
	}
	.looks .tools {
		display: flex;
		padding: 2px 9px 0;
		min-width: 0;
	}
	.gallery {
		flex: 1;
		min-width: 0;
		height: 60px;
		box-sizing: border-box;
		display: flex;
		overflow: hidden;
		background: #fff;
		border: 1px solid #c8c8c8;
		padding-left: 1px;
	}
	.look {
		width: 72px;
		height: 58px;
		flex: none;
		flex-direction: column;
		box-sizing: border-box;
		border: 3px solid transparent;
		gap: 4px;
	}
	.look.chosen {
		border-color: #c5c5c5;
		outline: 1px solid #888;
		outline-offset: -1px;
	}
	.sample {
		width: 58px;
		height: 22px;
		line-height: 22px;
		overflow: hidden;
		white-space: pre;
		text-align: left;
		color: #000;
		font-family: "Liberation Serif", "Noto Sans CJK SC", serif;
		font-size: 15px;
	}
	.sample.small { font-size: 12px; }
	.sample.big { font-size: 17px; }
	.sample.large { font-size: 17px; }
	.sample.plain-no { font-size: 16px; }
	.label {
		color: #666;
	}
	.label i {
		font: normal 9px "DejaVu Sans", sans-serif;
		margin-right: 4px;
	}
	.expand {
		width: 24px;
		height: 60px;
		border: 1px solid #888;
	}
	.load {
		width: 100%;
		flex-direction: column;
		gap: 11px;
		line-height: 15px;
		padding-top: 12px;
	}
	.dot {
		width: 10px;
		height: 10px;
		border-radius: 50%;
		background: #ff9500;
	}
	.fold {
		width: 98px;
		box-sizing: border-box;
		justify-content: flex-end;
		align-self: flex-end;
		padding: 0 7px 3px 0;
	}
	.fold svg {
		width: 10px;
		height: 7px;
	}

	/* licence notice */
	.notice {
		display: flex;
		align-items: center;
		height: 30px;
		box-sizing: border-box;
		background: #fcf7b6;
		border: solid #b08c00;
		border-width: 1px 0;
		padding: 0 10px 0 9px;
		flex: none;
	}
	.info {
		width: 22px;
		height: 22px;
	}
	.notice b {
		margin: 0 12px 0 9px;
	}
	.notice button {
		width: 107px;
		height: 23px;
		box-sizing: border-box;
		margin-left: 9px;
		background: #fff;
		border: 1px solid #ababab;
	}
	.notice .get {
		width: 121px;
		margin-left: 14px;
	}
	.notice .close {
		width: 10px;
		margin-left: auto;
		background: none;
		border: 0;
	}
	.close svg {
		width: 10px;
		height: 10px;
	}

	.work {
		flex: 1;
		min-height: 0;
		display: flex;
		position: relative;
	}

	/* navigation pane */
	aside {
		width: 349px;
		flex: none;
		display: flex;
		flex-direction: column;
		border-right: 1px solid #bdbdbd;
		color: #444;
	}
	.nav-head {
		display: flex;
		align-items: flex-start;
		gap: 28px;
		padding: 12px 16px 0 14px;
		height: 56px;
		box-sizing: border-box;
	}
	h1 {
		flex: 1;
		margin: 0;
		font-size: 21px;
		font-weight: normal;
		line-height: 28px;
		color: #222;
	}
	.nav-head button {
		margin-top: 4px;
	}
	.nav-head svg {
		width: 14px;
		height: 14px;
	}
	.search {
		display: flex;
		height: 26px;
		box-sizing: border-box;
		margin: 0 18px 0 14px;
		background: #fff;
		border: 1px solid #ababab;
	}
	.search input {
		flex: 1;
		min-width: 0;
		border: 0;
		padding: 0 0 2px 6px;
		background: none;
		font: inherit;
	}
	.search input::placeholder {
		color: #666;
	}
	.search button {
		gap: 4px;
		padding-right: 2px;
	}
	.nav-tabs {
		display: flex;
		gap: 23px;
		padding: 16px 14px 0;
	}
	.nav-tabs button {
		width: 26px;
		height: 28px;
		padding-bottom: 6px;
		box-sizing: border-box;
		border-bottom: 3px solid transparent;
	}
	.nav-tabs .active {
		color: #2b579a;
		font-weight: bold;
		border-color: #2b579a;
	}
	.tree {
		flex: 1;
		min-height: 0;
		overflow: hidden;
		margin: 3px 31px 0 0;
	}
	ul {
		list-style: none;
		margin: -12px 0 0;
		padding: 0;
	}
	li {
		height: 21px;
		display: flex;
		align-items: center;
		position: relative;
	}
	li button {
		flex: 1;
		height: 20px;
		justify-content: flex-start;
		padding-left: 5px;
		white-space: pre;
	}
	.l1 { padding-left: 30px; }
	.l2 { padding-left: 46px; }
	.l3 { padding-left: 62px; }
	.l4 { padding-left: 78px; }
	.current {
		background: #c2d5f2;
	}
	.tri {
		width: 7px;
		height: 7px;
		margin: 0 4px 0 -11px;
		fill: #333;
		stroke: none;
	}

	/* rulers */
	.rulers {
		width: 30px;
		flex: none;
		display: flex;
		flex-direction: column;
		align-items: flex-start;
	}
	.corner {
		width: 27px;
		height: 27px;
		flex: none;
		box-sizing: border-box;
		margin-left: 2px;
		background: #fff;
		border: 3px solid #d9d9d9;
	}
	.corner svg {
		width: 6px;
		height: 6px;
		stroke-width: 2;
	}
	.vruler {
		flex: 1;
		min-height: 0;
		width: 17px;
		margin: 105px 0 0 5px;
		overflow: hidden;
		display: flex;
		background: linear-gradient(#c6c6c6 86px, #fff 86px);
	}
	.vcells {
		flex: 1;
		display: flex;
		flex-direction: column;
		margin: -7px 0 -3px;
	}
	.vcells span {
		flex: 1;
		min-height: 0;
		display: flex;
		flex-direction: column;
		align-items: center;
		justify-content: space-between;
		padding: 9px 0;
		box-sizing: border-box;
	}
	.vcells i {
		width: 6px;
		height: 1px;
		background: #444;
	}
	.vcells b {
		height: 15px;
		writing-mode: vertical-rl;
		transform: rotate(180deg);
		font: 10px/17px "Liberation Sans", sans-serif;
		text-align: center;
	}
	main {
		flex: 1;
		min-width: 0;
		overflow: hidden;
		display: flex;
		justify-content: center;
		padding-right: 16px;
	}
	.hruler {
		width: 711px;
		height: 16px;
		margin: 5px 0 9px;
		position: relative;
		background: linear-gradient(90deg, #c6c6c6 85px, #fff 85px 624px, #c6c6c6 624px);
	}
	.hcells {
		display: flex;
		padding-right: 13px;
		margin-left: -4px;
		font: 10px/16px "Liberation Sans", sans-serif;
	}
	.hcells span {
		flex: 1;
		text-align: center;
	}
	.indent {
		position: absolute;
		left: 79px;
		top: -3px;
		width: 10px;
		height: 28px;
		fill: #fff;
		stroke: #777;
	}
	.indent.end-stop {
		left: 621px;
		top: 9px;
		height: 10px;
	}

	/* document */
	.spread {
		display: flex;
		gap: 15px;
	}
	.sheet {
		width: 711px;
		box-sizing: border-box;
		background: #fff;
		border: 1px solid #c3c3c3;
	}
	.tail {
		height: 90px;
		border-top: 0;
		padding-top: 5px;
		margin-bottom: 13px;
	}
	article {
		height: 1006px;
		padding-top: 62px;
	}
	.marks {
		display: flex;
		justify-content: space-between;
		padding: 0 62px 0 63px;
		height: 21px;
	}
	.mark {
		width: 21px;
		height: 20px;
		border: 0 solid #a6a6a6;
	}
	.tl { border-width: 1px 1px 0 0; }
	.tr { border-width: 1px 0 0 1px; }
	.bl { border-width: 0 1px 1px 0; }
	.br { border-width: 0 0 1px 1px; }
	.folio {
		padding: 12px 0 0 6px;
		font: 11px/14px "Liberation Serif", serif;
		color: #777;
	}
	.folio i {
		font: 10px "DejaVu Sans", sans-serif;
		color: #999;
	}
	.text {
		padding: 1px 0 0 94px;
		font-family: "Noto Sans CJK SC", sans-serif;
		font-size: 14px;
		line-height: 31px;
		color: #000;
		white-space: nowrap;
	}
	h2, h3, p {
		margin: 0;
	}
	h2 {
		font-size: 18px;
		line-height: 41px;
	}
	h3 {
		font-size: 16px;
		line-height: 31px;
		position: relative;
	}
	h3::before {
		content: "";
		position: absolute;
		left: -9px;
		top: 13px;
		width: 4px;
		height: 5px;
		background: #000;
	}
	.no {
		display: inline-block;
		width: 55px;
		font-family: "Liberation Serif", serif;
		font-size: 18px;
		line-height: 20px;
	}
	h2 .no {
		width: 66px;
		font-size: 21px;
	}
	.line {
		display: block;
	}
	p:not(.flush) .line:first-child {
		padding-left: 37px;
	}
	.end {
		font: 14px/11px "DejaVu Sans", sans-serif;
		color: #999;
	}
	.callout {
		position: absolute;
		box-sizing: border-box;
		border: 4px solid #d31221;
		pointer-events: none;
		z-index: 1;
	}
	.first {
		left: 534px;
		top: 311px;
		width: 431px;
		height: 32px;
	}
	.second {
		left: 522px;
		bottom: -14px;
		width: 336px;
		height: 27px;
	}

	/* status bar */
	footer {
		height: 22px;
		flex: none;
		box-sizing: border-box;
		display: flex;
		align-items: center;
		background: #f3f3f3;
		border-top: 1px solid #c8c8c8;
		padding: 0 12px;
		color: #444;
		white-space: nowrap;
	}
	.words { margin: 0 20px 0 23px; }
	.lang { margin: 0 19px 0 16px; }
	.track { margin-right: 18px; }
	footer b { font-weight: 500; margin-left: 4px; }
	.views {
		display: flex;
		align-self: stretch;
		margin-left: auto;
	}
	.views button {
		width: 40px;
	}
	.views .on {
		background: #c6c6c6;
	}
	.step {
		width: 18px;
		font-size: 16px;
	}
	footer input {
		appearance: none;
		width: 100px;
		height: 14px;
		margin: 0;
		background: linear-gradient(#444, #444) 50% 50% / 100% 1px no-repeat, linear-gradient(#444, #444) 50% 50% / 1px 7px no-repeat;
	}
	footer input::-webkit-slider-thumb {
		appearance: none;
		width: 5px;
		height: 13px;
		background: #444;
	}
	output {
		width: 26px;
		margin-left: 8px;
	}
	.taskbar {
		height: 6px;
		flex: none;
		background: linear-gradient(90deg, #1f3a47, #1c3346 60%, #1a2348);
	}
	.taskbar i {
		display: block;
		width: 48px;
		height: 6px;
		margin-left: 741px;
		background: #4a626f;
	}
</style>
